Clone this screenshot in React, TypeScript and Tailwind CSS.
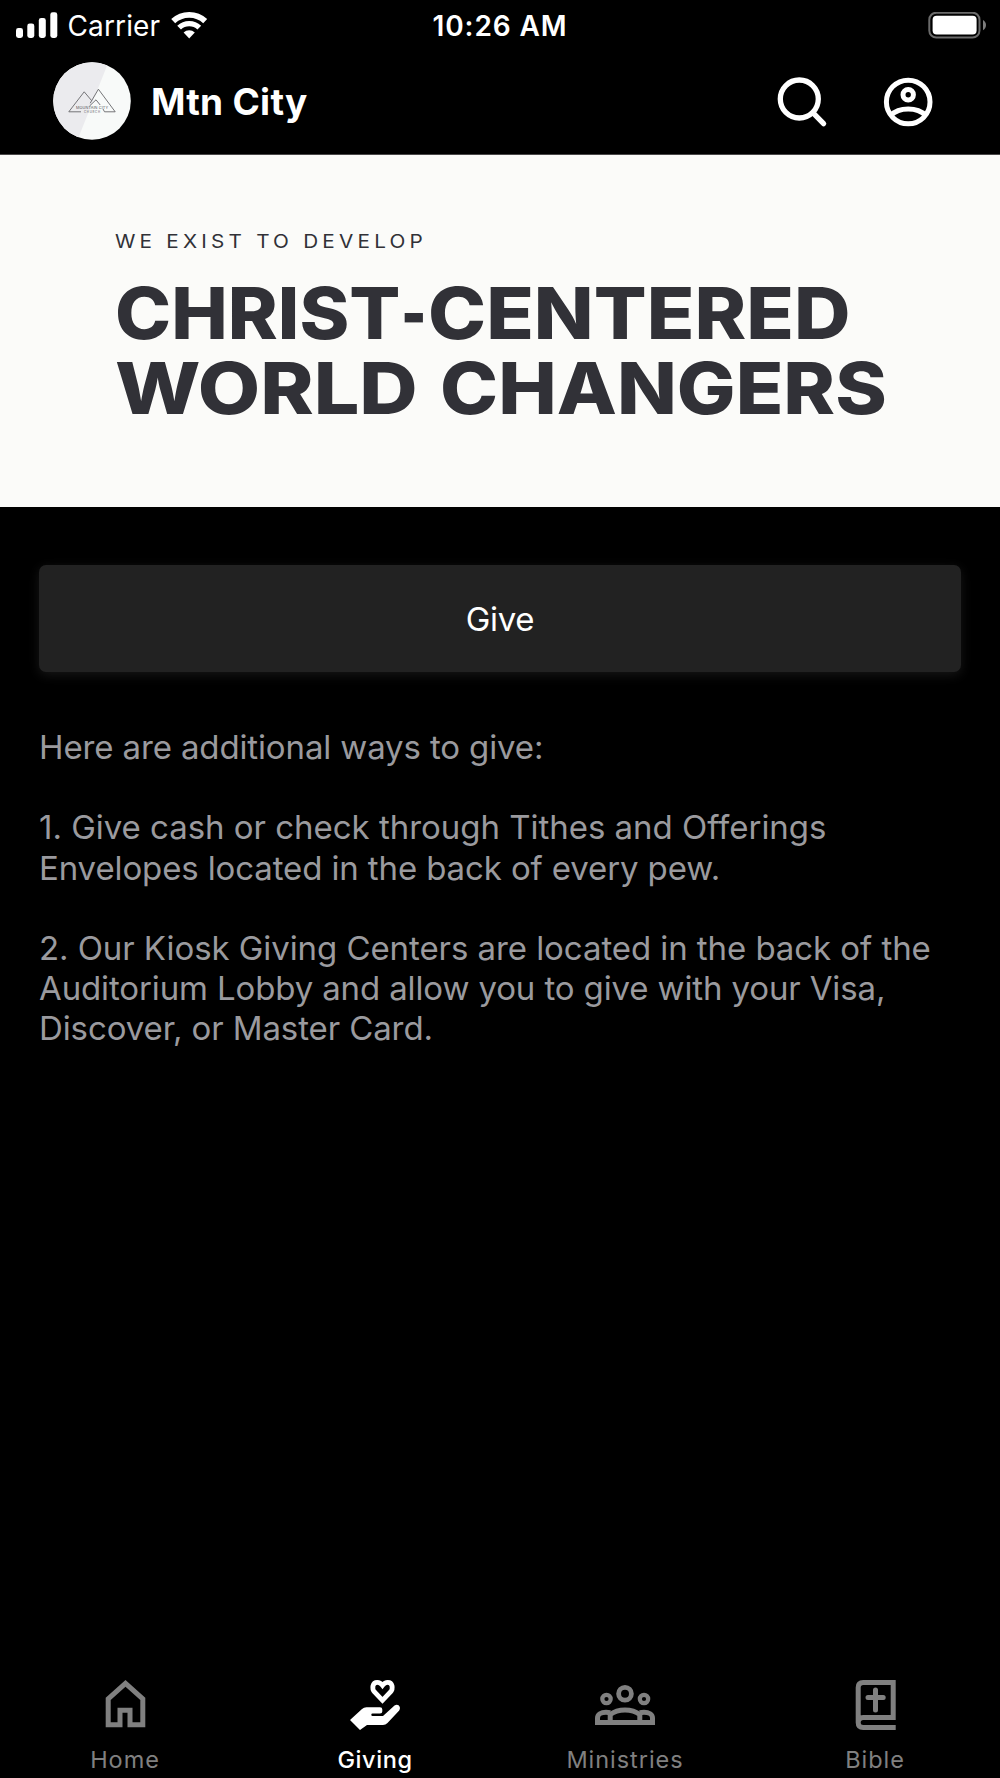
import type { ReactNode } from "react";
import clsx from "clsx";

type Tab = {
  label: string;
  icon: ReactNode;
  active?: boolean;
};

const tabs: Tab[] = [
  { label: "Home", icon: <HomeIcon /> },
  { label: "Giving", icon: <GivingIcon />, active: true },
  { label: "Ministries", icon: <MinistriesIcon /> },
  { label: "Bible", icon: <BibleIcon /> },
];

export default function App() {
  return (
    <div className="flex h-[1778px] w-[1000px] flex-col overflow-hidden bg-black font-['Inter','Liberation_Sans',sans-serif] text-white">
      <StatusBar />
      <Header />
      <Banner />

      <main className="flex-1 px-[39px] pt-[58px]">
        <button className="flex h-[107px] w-full items-center justify-center rounded-[7px] bg-[#222222] pt-0.5 text-[33px] tracking-[-0.3px] shadow-[0_3px_12px_rgba(255,255,255,0.09)]">
          Give
        </button>

        <div className="mt-[55px] space-y-[40.2px] whitespace-nowrap text-[33px] leading-[40.2px] text-[#9a9a9e]">
          <p className="tracking-[-0.13px]">Here are additional ways to give:</p>
          <p>
            <span className="block tracking-[-0.028px]">
              1. Give cash or check through Tithes and Offerings
            </span>
            <span className="block tracking-[-0.12px]">
              Envelopes located in the back of every pew.
            </span>
          </p>
          <p>
            <span className="block tracking-[-0.07px]">
              2. Our Kiosk Giving Centers are located in the back of the
            </span>
            <span className="block tracking-[-0.13px]">
              Auditorium Lobby and allow you to give with your Visa,
            </span>
            <span className="block tracking-[-0.1px]">
              Discover, or Master Card.
            </span>
          </p>
        </div>
      </main>

      <nav className="grid h-[102px] grid-cols-4">
        {tabs.map((tab) => (
          <div
            key={tab.label}
            className={clsx(
              "flex flex-col items-center gap-[14px] text-[23.5px] leading-[28px]",
              tab.active
                ? "font-medium tracking-[0.6px] text-white"
                : "tracking-[0.95px] text-[#808080]",
            )}
          >
            {tab.icon}
            <span>{tab.label}</span>
          </div>
        ))}
      </nav>
    </div>
  );
}

function StatusBar() {
  return (
    <div className="grid h-[51px] shrink-0 grid-cols-[1fr_auto_1fr] items-center pl-4 pr-[13px] text-[28px]">
      <div className="flex items-center">
        <svg width="42" height="28" viewBox="0 0 42 28" fill="currentColor">
          <rect x="0" y="16" width="7" height="10" rx="2.4" />
          <rect x="11.3" y="11.5" width="7" height="14.5" rx="2.4" />
          <rect x="22.8" y="6" width="7" height="20" rx="2.4" />
          <rect x="34.3" y="0.3" width="7" height="25.7" rx="2.4" />
        </svg>
        <span className="ml-[9.5px] tracking-[0.13px]">Carrier</span>
        <svg
          className="ml-[10px]"
          width="38"
          height="32"
          viewBox="0 1 38 32"
          fill="none"
          stroke="currentColor"
        >
          <path d="M3.2 12.1A23.4 23.4 0 0 1 35.2 12.1" strokeWidth="5.8" />
          <path d="M9.1 18.6A14.7 14.7 0 0 1 29.3 18.6" strokeWidth="5.4" />
          <path d="M19.2 29.6 13.6 23.5A8.4 8.4 0 0 1 24.8 23.5Z" fill="currentColor" stroke="none" />
        </svg>
      </div>
      <span className="-ml-[3px] font-semibold tracking-[0.9px]">10:26 AM</span>
      <svg
        className="justify-self-end"
        width="59"
        height="28"
        viewBox="0 0 59 28"
        fill="none"
      >
        <rect x="1.3" y="0.7" width="50.2" height="24.8" rx="7" stroke="#6b6b6b" strokeWidth="2" />
        <rect x="4.6" y="3.8" width="44" height="18.6" rx="4" fill="white" />
        <path d="M55 7.9Q58 9.7 58 13.1T55 18.3Z" fill="#7d7d7d" />
      </svg>
    </div>
  );
}

function Header() {
  return (
    <header className="flex h-[104px] shrink-0 items-center border-b border-[#4a4849] pb-[3px] pl-[53px] pr-[64px]">
      <ChurchLogo />
      <h1 className="ml-5 text-[37px] font-bold leading-none tracking-[0.27px]">
        Mtn City
      </h1>
      <div className="ml-auto flex gap-[50px]">
        <svg width="56" height="56" viewBox="0 0 56 56" fill="none" stroke="currentColor" strokeWidth="5.3">
          <circle cx="25.3" cy="26" r="19" />
          <path d="M39.3 40.2 49.6 50.6" strokeLinecap="round" />
        </svg>
        <svg width="56" height="56" viewBox="0 0 56 56" fill="none" stroke="currentColor" strokeWidth="5">
          <circle cx="28.2" cy="29" r="21.8" />
          <circle cx="28.2" cy="21.7" r="5.2" />
          <path d="M10.8 42.3C15 37.9 21 35.9 28.2 35.9S41.4 37.9 45.6 42.3" />
        </svg>
      </div>
    </header>
  );
}

function ChurchLogo() {
  return (
    <svg width="78" height="78" viewBox="0 0 78 78">
      <clipPath id="logo-circle">
        <circle cx="39" cy="39" r="38.8" />
      </clipPath>
      <g clipPath="url(#logo-circle)">
        <rect width="78" height="78" fill="#f8faf9" />
        <path d="M0 0H55.5L24.5 78H0Z" fill="#ebebee" />
      </g>
      <g fill="none" stroke="#66666a" strokeWidth="0.9">
        <path d="M28 49.8H15.8L31.2 29.8 38.6 38.6" />
        <path d="M37.2 41.2 45.4 27.2 62.2 49.8H51.5L50 47" />
        <path d="M36.5 44 43 37.8 47.2 43" />
      </g>
      <g
        fill="#55555a"
        fontFamily="Inter, sans-serif"
        textAnchor="middle"
      >
        <text x="39" y="47.2" fontSize="3.8" textLength="32">MOUNTAIN CITY</text>
        <text x="39" y="51" fontSize="2.8" textLength="16">CHURCH</text>
      </g>
    </svg>
  );
}

function Banner() {
  return (
    <section className="h-[352px] shrink-0 whitespace-nowrap bg-[#fbfbf9] pl-[115px] pt-[72px] text-[#313137]">
      <p className="text-[18.5px] leading-[28px]">
        <span className="inline-block origin-left scale-x-[1.12] tracking-[3.75px]">
          WE EXIST TO DEVELOP
        </span>
      </p>
      <h2 className="mt-[21px] text-[71.5px] font-extrabold leading-[75px]">
        <span className="flex">
          <Stretched className="w-[286px]" scale="scale-x-[1.057]">CHRIST</Stretched>
          <Stretched className="w-[27px]" scale="scale-x-[0.76]">-</Stretched>
          <Stretched scale="scale-x-[1.094]">CENTERED</Stretched>
        </span>
        <span className="flex">
          <Stretched className="w-[325px]" scale="scale-x-[1.13]">WORLD</Stretched>
          <Stretched scale="scale-x-[1.094]">CHANGERS</Stretched>
        </span>
      </h2>
    </section>
  );
}

// Widens a word without changing its height
function Stretched({
  className,
  scale,
  children,
}: {
  className?: string;
  scale: string;
  children: ReactNode;
}) {
  return (
    <span className={className}>
      <span className={clsx("inline-block origin-left", scale)}>{children}</span>
    </span>
  );
}

function HomeIcon() {
  return (
    <svg width="56" height="56" viewBox="0 0 56 56" fill="none" stroke="currentColor" strokeWidth="5">
      <path d="M11.2 48.8H23V34.2H33V48.8H45.8V22.8L28.5 7.3 11.2 22.8Z" />
    </svg>
  );
}

function GivingIcon() {
  return (
    <svg width="56" height="56" viewBox="0 0 56 56" fill="none">
      <path
        d="M35.5 24.3 27.5 16C24.5 12.5 25.5 6.3 30.3 6.3 33 6.3 34.5 8 35.5 9.3 36.5 8 38 6.3 40.7 6.3 45.5 6.3 46.5 12.5 43.5 16Z"
        stroke="currentColor"
        strokeWidth="4.8"
      />
      <path
        d="M3 44 15 33Q16.8 31.3 19.5 31.3H33Q35.3 31.3 35.3 33.5V35.5Q35.3 37.6 33 37.6H25.5A1.2 1.2 0 0 0 25.5 40H36L47.5 29.6Q49.5 28 51.6 29.2 54 31.5 52.2 34.4L40.5 47Q38.5 49 36 49H20L13 54Z"
        fill="currentColor"
      />
    </svg>
  );
}

function MinistriesIcon() {
  return (
    <svg width="60" height="56" viewBox="0 0 60 56" fill="none" stroke="currentColor">
      <circle cx="30" cy="17.7" r="6.4" strokeWidth="4.8" />
      <circle cx="11.5" cy="23" r="4.2" strokeWidth="4.2" />
      <circle cx="49" cy="23" r="4.2" strokeWidth="4.2" />
      <g strokeWidth="5">
        <path d="M15.2 46.5V38.5C19 35.5 24 33.9 30 33.9S41 35.5 44.8 38.5V46.5Z" />
        <path d="M15.2 36.8C13.5 36.4 12.3 36.3 11 36.3 6 36.3 2.5 38.5 2.5 42V46.5H15.2" />
        <path d="M44.8 36.8C46.5 36.4 47.7 36.3 49 36.3 54 36.3 57.5 38.5 57.5 42V46.5H44.8" />
      </g>
    </svg>
  );
}

function BibleIcon() {
  return (
    <svg width="56" height="56" viewBox="0 0 56 56" fill="none" stroke="currentColor" strokeWidth="5">
      <path d="M48.7 51.5H16.2Q11.2 51.5 11.2 46.5V11.5Q11.2 6.5 16.2 6.5H46.2V41.5H16.2Q11.2 41.5 11.2 46.5" />
      <path d="M28.5 14V34M21 21.4H36.2" strokeLinecap="round" />
    </svg>
  );
}
